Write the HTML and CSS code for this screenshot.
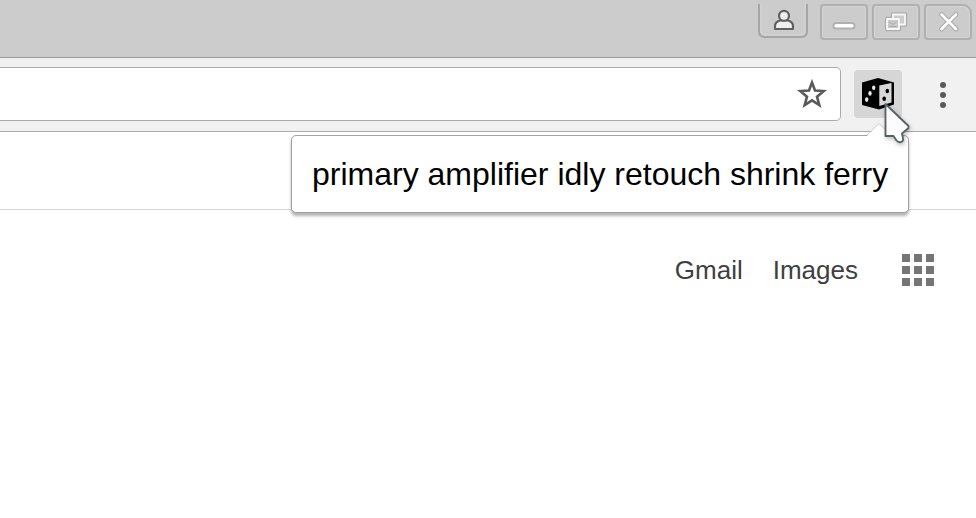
FILE: index.html
```html
<!DOCTYPE html>
<html lang="en">
<head>
<meta charset="utf-8">
<title>New Tab</title>
<link rel="stylesheet" href="styles.css">
</head>
<body>
<header class="titlebar">
  <div class="profile">
    <svg width="50" height="40" viewBox="0 0 50 40" fill="none">
      <path d="M1 4V31Q1 37 7 37H43Q49 37 49 31V4" stroke="#a6a6a6" stroke-width="2"/>
      <path d="M3 4V31Q3 35 7 35H43Q47 35 47 31V4" stroke="#d6d6d6"/>
      <path d="M17 29V26Q17 22 22 20.500H30Q35 22 35 26V29Z" fill="#eee" stroke="#606060" stroke-width="2.200" stroke-linejoin="round"/>
      <circle cx="26" cy="15.800" r="5" fill="#eee" stroke="#606060" stroke-width="2.200"/>
    </svg>
  </div>
  <div class="window-button">
    <svg width="44" height="32" viewBox="0 0 44 32"><rect x="11.500" y="17" width="21" height="5.500" rx="2.500" fill="#fff" stroke="#b0b0b0" stroke-width="2"/></svg>
  </div>
  <div class="window-button">
    <svg width="44" height="32" viewBox="0 0 44 32" fill="none" stroke-linejoin="round">
      <path d="M19 8.500H31V18.500H19Z M13 13H25V23H13Z" stroke="#adadad" stroke-width="4.500"/>
      <path d="M19 8.500H31V18.500H19Z" fill="#ccc" stroke="#f8f8f8" stroke-width="1.800"/>
      <path d="M13 13H25V23H13Z" fill="#c9c9c9" stroke="#f8f8f8" stroke-width="1.800"/>
      <path d="M15.500 16L19 18.500L22.500 16M15.500 20.500H22.500" stroke="#aaa"/>
    </svg>
  </div>
  <div class="window-button close">
    <svg width="44" height="32" viewBox="0 0 44 32" fill="none" stroke-linecap="round">
      <path d="M15.500 8.500L30 23M30 8.500L15.500 23" stroke="#adadad" stroke-width="5"/>
      <path d="M15.500 8.500L30 23M30 8.500L15.500 23" stroke="#fff" stroke-width="2.600"/>
    </svg>
  </div>
</header>
<nav class="toolbar">
  <div class="omnibox">
    <svg width="30" height="30" viewBox="0 0 30 30"><path d="M15 3.500L18 11.500L26.800 12L20 17.700L22.300 26L15 21.300L7.700 26L10 17.700L3.200 12L12 11.500Z" fill="none" stroke="#5a5a5a" stroke-width="2.600"/></svg>
  </div>
  <div class="extension">
    <svg width="48" height="48" viewBox="0 0 48 48">
      <path d="M8 12.500L24 8L40 12.500V34.500L25 39.500L8 35Z"/>
      <path d="M25.300 15.500L37.500 13V32.500L25.300 36Z" fill="#d8d8d8"/>
      <g fill="#e8e8e8"><ellipse cx="19.700" cy="17.700" rx="1.700" ry="2.300"/><ellipse cx="16" cy="23.400" rx="1.700" ry="2.300"/><ellipse cx="12.700" cy="29.600" rx="1.700" ry="2.300"/></g>
      <ellipse cx="33.300" cy="21" rx="1.800" ry="2.300"/><ellipse cx="30.200" cy="28.800" rx="1.800" ry="2.300"/>
    </svg>
  </div>
  <svg class="more" width="8" height="28" viewBox="0 0 8 28" fill="#5a5a5a"><circle cx="4" cy="4" r="3"/><circle cx="4" cy="14" r="3"/><circle cx="4" cy="24" r="3"/></svg>
</nav>
<div class="bookmarks"></div>
<main class="page">
  <a class="link">Gmail</a>
  <a class="link">Images</a>
  <div class="apps"><i></i><i></i><i></i><i></i><i></i><i></i><i></i><i></i><i></i></div>
</main>
<div class="popup">primary amplifier idly retouch shrink ferry
  <svg class="arrow" width="26" height="15" viewBox="0 0 26 15"><path d="M1 14L13 2L25 14V15H1Z" fill="#fff"/><path d="M1 13L13 1.500L25 13" fill="none" stroke="#c4c4c4" stroke-width=".8"/></svg>
</div>
<svg class="cursor" width="32" height="50" viewBox="0 0 32 50"><path d="M3.500 5V37H11.500L14.500 41.500Q17 44.500 20 42.500Q21.500 41.500 21 39.500L20 34.500L26.500 29V27Z" fill="#fcfcfc" stroke="#566061" stroke-width="1.800" stroke-linejoin="round"/></svg>
</body>
</html>
```

FILE: styles.css
```css
* { box-sizing: border-box; }
body {
  margin: 0;
  width: 976px;
  height: 518px;
  overflow: hidden;
  background: #fff;
  font-family: "Liberation Sans", Arial, sans-serif;
}
svg { display: block; flex: none; }
.titlebar {
  display: flex;
  justify-content: flex-end;
  gap: 4px;
  height: 58px;
  padding-right: 4px;
  background: #ccc;
  border-bottom: 1px solid #999;
}
.profile { margin-right: 8px; }
.window-button {
  width: 48px;
  height: 36px;
  margin-top: 4px;
  border: 2px solid #b0b0b0;
  border-radius: 4px;
  box-shadow: inset 0 0 0 1px #d5d5d5;
}
.close { border-top-right-radius: 9px; }
.toolbar {
  display: flex;
  align-items: center;
  height: 74px;
  padding-bottom: 1px;
  background: #f1f1f1;
  border-bottom: 1px solid #aaa;
}
.omnibox {
  display: flex;
  align-items: center;
  justify-content: flex-end;
  width: 841px;
  height: 54px;
  padding-right: 13px;
  background: #fff;
  border: 1px solid #aaa;
  border-left: 0;
  border-radius: 0 5px 5px 0;
}
.extension {
  margin-left: 13px;
  background: #d6d6d6;
  border-radius: 4px;
}
.more { margin: 1px 0 0 37px; }
.bookmarks { height: 78px; border-bottom: 1px solid #d8d8d8; }
.page {
  display: flex;
  justify-content: flex-end;
  align-items: center;
  height: 120px;
  padding-right: 42px;
}
.link {
  margin-right: 30px;
  color: #404040;
  font-size: 26px;
  line-height: 30px;
}
.apps {
  display: grid;
  grid-template-columns: repeat(3, 8px);
  grid-auto-rows: 8px;
  gap: 4px;
  margin-left: 14px;
}
.apps i { background: #757575; }
.popup {
  position: absolute;
  left: 291px;
  top: 135px;
  width: 618px;
  height: 78px;
  padding-left: 20px;
  background: #fff;
  border: 1px solid #a3a3a3;
  border-radius: 5px;
  box-shadow: 0 3px 3px rgba(0, 0, 0, .3);
  color: #000;
  font-size: 32px;
  line-height: 77px;
  white-space: nowrap;
}
.arrow { position: absolute; left: 574px; top: -14px; }
.cursor {
  position: absolute;
  left: 882px;
  top: 99px;
  filter: drop-shadow(1px 2px 2px rgba(0, 0, 0, .25));
}
```
